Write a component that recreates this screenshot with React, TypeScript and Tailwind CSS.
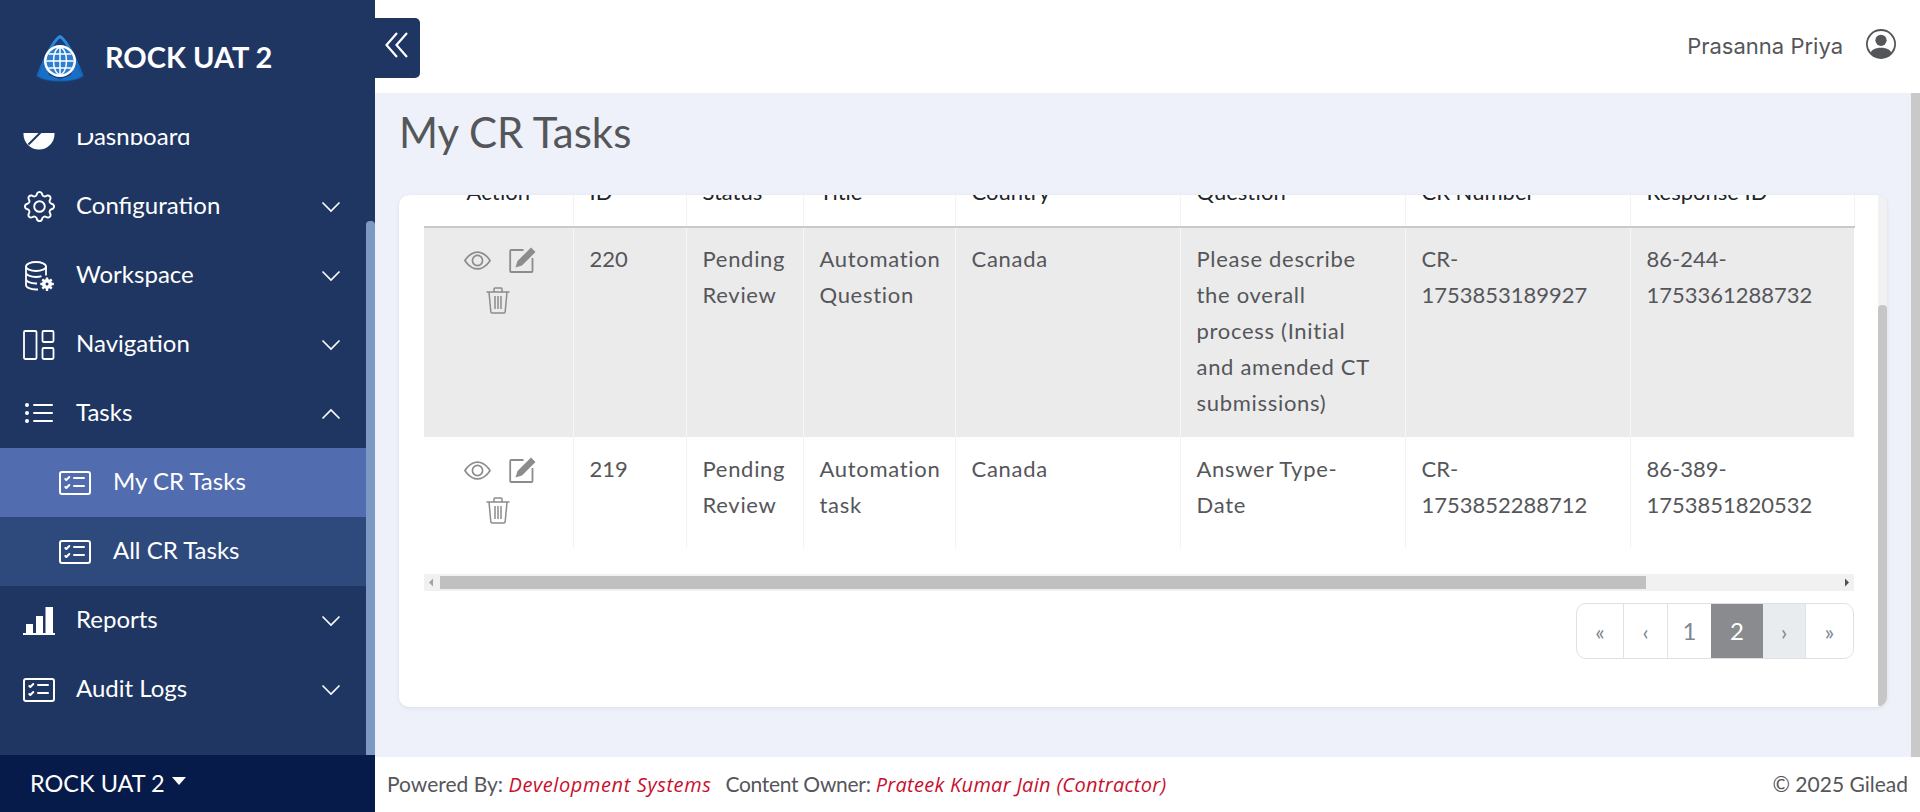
import { BsGear, BsListUl, BsCardChecklist, BsEye, BsPersonCircle } from "react-icons/bs";

const F = "font-['Lato','Liberation_Sans',sans-serif]";

function Chevron({ up }: { up?: boolean }) {
  return (
    <svg width="20" height="12" viewBox="0 0 20 12" fill="none" stroke="#ffffff" strokeWidth="1.6" className="mr-[25px] shrink-0">
      {up ? <path d="M1.5 10.5 10 2l8.5 8.5" /> : <path d="M1.5 1.5 10 10l8.5-8.5" />}
    </svg>
  );
}

function Logo() {
  return (
    <svg width="50" height="50" viewBox="0 0 50 50" className="shrink-0">
      <defs>
        <linearGradient id="tri" x1="0" y1="0" x2="0" y2="1">
          <stop offset="0" stopColor="#2f8fe0" />
          <stop offset="1" stopColor="#0b5cb0" />
        </linearGradient>
      </defs>
      <path d="M25 2.500C31 6 40 24 47 41.500 38 47.500 12 47.500 3 41.500 10 24 19 6 25 2.500Z" fill="#14407e" stroke="url(#tri)" strokeWidth="3" strokeLinejoin="round" />
      <path d="M3 41.500 11 28l3 13 13 5c-9 1.500-18 0-24-4.500ZM47 41.500 39 28l-3 13-13 5c9 1.500 18 0 24-4.500Z" fill="#1a6fc4" />
      <circle cx="25" cy="27" r="16" fill="#ffffff" />
      <circle cx="25" cy="27" r="13.500" fill="#2f7fd0" />
      <g stroke="#ffffff" strokeWidth="1.500" fill="none">
        <ellipse cx="25" cy="27" rx="6.500" ry="13.500" />
        <path d="M25 13.500v27M11.500 27h27M13.500 20h23M13.500 34h23" />
      </g>
    </svg>
  );
}

function DashIcon() {
  return (
    <svg width="32" height="32" viewBox="0 0 32 32" className="shrink-0 mb-[7px]">
      <circle cx="16" cy="16" r="15.500" fill="#ffffff" />
      <path d="M19 13 5.500 26.500" stroke="#1f3663" strokeWidth="2" />
    </svg>
  );
}

function DbIcon() {
  return (
    <svg width="30" height="30" viewBox="0 0 30 30" fill="none" stroke="#ffffff" strokeWidth="1.800" className="shrink-0">
      <ellipse cx="12" cy="5.500" rx="10" ry="4.500" />
      <path d="M2 5.500v18.500c0 2.500 4.500 4.500 10 4.500h2M22 5.500v9M2 11.500c0 2.500 4.500 4.500 10 4.500 2 0 4-.3 5.500-.8M2 18c0 2.500 4.500 4.500 10 4.500h1" />
      <path d="M23 16.500v13.500M16.300 23h13.500M18.300 18.300l9.400 9.400M27.700 18.300l-9.400 9.400" strokeWidth="2.400" />
      <circle cx="23" cy="23" r="5" fill="#ffffff" stroke="none" />
      <circle cx="23" cy="23" r="1.500" fill="#1f3663" stroke="none" />
    </svg>
  );
}

function PanelIcon() {
  return (
    <svg width="32" height="30" viewBox="0 0 32 30" fill="none" stroke="#ffffff" strokeWidth="1.800" className="shrink-0">
      <rect x="1" y="1" width="12.500" height="28" rx="1.200" />
      <rect x="19.500" y="1" width="11" height="11" rx="1.200" />
      <rect x="19.500" y="18" width="11" height="11" rx="1.200" />
    </svg>
  );
}

function BarsIcon() {
  return (
    <svg width="32" height="28" viewBox="0 0 32 28" fill="#ffffff" className="shrink-0">
      <rect x="3" y="17" width="7" height="9" />
      <rect x="13" y="9" width="7" height="17" />
      <rect x="22.500" y="0" width="7.500" height="26" />
      <rect x="0" y="26" width="32" height="2" />
    </svg>
  );
}

function EditIcon() {
  return (
    <svg width="27" height="26" viewBox="0 0 27 26" fill="none" className="shrink-0">
      <path d="M14.500 3H2.200a1 1 0 0 0-1 1v20a1 1 0 0 0 1 1h20.300a1 1 0 0 0 1-1V11" stroke="#8c8c8c" strokeWidth="1.800" />
      <path d="M22 .5 26.500 5 13 18.500l-6.500 2 2-6.500Z" fill="#8c8c8c" />
    </svg>
  );
}

function TrashIcon() {
  return (
    <svg width="24" height="27" viewBox="0 0 24 27" fill="none" stroke="#8c8c8c" strokeWidth="1.500" className="shrink-0">
      <path d="M.5 5h23M8 5V2a1 1 0 0 1 1-1h6a1 1 0 0 1 1 1v3M3 5l1.800 19.500a1.500 1.500 0 0 0 1.500 1.500h11.400a1.500 1.500 0 0 0 1.500-1.500L21 5M9 9v13M12 9v13M15 9v13" />
    </svg>
  );
}

const iconWrap = "w-[32px] flex justify-center shrink-0";

function NavRow({ icon, label, up, chevron = true }: { icon: React.ReactNode; label: string; up?: boolean; chevron?: boolean }) {
  return (
    <div className="h-[69px] flex items-center pl-[23px] text-white">
      <div className={iconWrap}>{icon}</div>
      <span className="ml-[21px] mb-[4px] flex-1 text-[24px] leading-none">{label}</span>
      {chevron && <Chevron up={up} />}
    </div>
  );
}

function SubRow({ label, active }: { label: string; active?: boolean }) {
  return (
    <div className={`h-[69px] flex items-center pl-[59px] text-white ${active ? "bg-[#526cb0]" : "bg-[#2e4a7d]"}`}>
      <BsCardChecklist size={32} />
      <span className="ml-[22px] mb-[4px] text-[24px] leading-none">{label}</span>
    </div>
  );
}

const cols = [149, 113, 117, 152, 225, 225, 225, 224];
const headers = ["Action", "ID", "Status", "Title", "Country", "Question", "CR Number", "Response ID"];
const rows = [
  {
    bg: "bg-[#ebebeb]",
    border: "border-[#f7f7f7]",
    h: "h-[210px]",
    pad: "pt-[13px]",
    iconPad: "pt-[17px]",
    cells: [
      ["220"],
      ["Pending", "Review"],
      ["Automation", "Question"],
      ["Canada"],
      ["Please describe", "the overall", "process (Initial", "and amended CT", "submissions)"],
      ["CR-", "1753853189927"],
      ["86-244-", "1753361288732"],
    ],
  },
  {
    bg: "bg-white",
    border: "border-[#f3f3f3]",
    h: "h-[111px]",
    pad: "pt-[14px]",
    iconPad: "pt-[18px]",
    cells: [
      ["219"],
      ["Pending", "Review"],
      ["Automation", "task"],
      ["Canada"],
      ["Answer Type-", "Date"],
      ["CR-", "1753852288712"],
      ["86-389-", "1753851820532"],
    ],
  },
];

function Pagination() {
  const base = "h-full flex items-center justify-center border-[#dee2e6] text-[#7d8794]";
  return (
    <div className="flex justify-end mt-[12px]">
      <div className="flex h-[56px] w-[278px] rounded-[10px] border border-[#dee2e6] overflow-hidden bg-white">
        <div className={`${base} w-[47px] border-r text-[22px]`}>«</div>
        <div className={`${base} w-[44px] border-r text-[22px]`}>‹</div>
        <div className={`${base} w-[43px] text-[24px] text-[#7a7a7a]`}>1</div>
        <div className={`${base} w-[52px] bg-[#8a8b8e] text-[24px] !text-white`}>2</div>
        <div className={`${base} w-[43px] bg-[#e9ecef] border-r text-[22px]`}>›</div>
        <div className={`${base} flex-1 text-[22px]`}>»</div>
      </div>
    </div>
  );
}

function HScrollbar() {
  return (
    <div className="mt-[26px] h-[17px] bg-[#f1f1f1] flex items-center">
      <svg width="16" height="17" viewBox="0 0 16 17" className="shrink-0" fill="#a3a3a3">
        <path d="M5 8.500 9 4.500v8Z" />
      </svg>
      <div className="w-[1206px] h-[13px] bg-[#c0c0c0]" />
      <div className="flex-1" />
      <svg width="15" height="17" viewBox="0 0 15 17" className="shrink-0" fill="#505050">
        <path d="M10 8.500 6 4.500v8Z" />
      </svg>
    </div>
  );
}

export default function App() {
  return (
    <div className={`flex h-[812px] w-[1920px] overflow-hidden ${F} text-[#55565a]`}>
      <aside className="w-[375px] shrink-0 flex flex-col bg-[#1f3663] relative">
        <div className="h-[133px] shrink-0 flex items-start pl-[35px] pt-[34px] relative z-10 bg-[#1f3663]">
          <Logo />
          <span className="ml-[20px] mt-[4px] text-[29px] font-bold text-white leading-[38px]">ROCK UAT 2</span>
        </div>
        <div className="flex-1 overflow-hidden relative">
          <div className="mt-[-30px] mr-[9px]">
            <NavRow icon={<DashIcon />} label="Dashboard" chevron={false} />
            <NavRow icon={<BsGear size={31} />} label="Configuration" />
            <NavRow icon={<DbIcon />} label="Workspace" />
            <NavRow icon={<PanelIcon />} label="Navigation" />
            <NavRow icon={<BsListUl size={32} />} label="Tasks" up />
            <SubRow label="My CR Tasks" active />
            <SubRow label="All CR Tasks" />
            <NavRow icon={<BarsIcon />} label="Reports" />
            <NavRow icon={<BsCardChecklist size={32} />} label="Audit Logs" />
          </div>
          <div className="absolute right-0 top-[88px] bottom-0 w-[9px] bg-[#7d98c2] rounded-t-[4px]" />
        </div>
        <div className="h-[57px] shrink-0 bg-[#061b49] flex items-center pl-[30px] text-white">
          <span className="text-[23.5px] leading-none">ROCK UAT 2</span>
          <span className="ml-[7px] mb-[6px] w-0 h-0 border-x-[7px] border-x-transparent border-t-[8px] border-t-white" />
        </div>
        <button className="absolute left-[375px] top-[18px] w-[45px] h-[60px] bg-[#1f3663] rounded-r-[5px] flex items-start justify-center pt-[14px] pr-[2px] z-20">
          <svg width="23" height="26" viewBox="0 0 23 26" fill="none" stroke="#ffffff" strokeWidth="2.200">
            <path d="M12 1 1.500 13 12 25M22 1 11.500 13 22 25" />
          </svg>
        </button>
      </aside>

      <div className="flex-1 flex flex-col min-w-0">
        <header className="h-[93px] shrink-0 bg-white flex items-start justify-end pr-[24px]">
          <span className="mt-[32px] text-[22px] leading-[28px] font-['Inter',sans-serif] text-[#55565a]">Prasanna Priya</span>
          <BsPersonCircle size={30} className="ml-[23px] mt-[29px] text-[#55565a]" />
        </header>

        <div className="flex-1 flex min-h-0 bg-[#eef1f9]">
          <main className="flex-1 min-w-0 pl-[24px] pr-[24px] flex flex-col">
            <h1 className="h-[102px] pt-[17px] text-[42px] leading-[44px] font-normal text-[#55565a] shrink-0">My CR Tasks</h1>
            <div className="h-[512px] shrink-0 flex bg-white rounded-[10px] overflow-hidden shadow-[0_1px_4px_rgba(0,0,0,0.08)]">
              <div className="flex-1 min-w-0 pl-[25px] pr-[24px] overflow-hidden">
                <table className="table-fixed border-collapse w-[1430px] mt-[-37px] text-[22px] leading-[36px]">
                  <colgroup>
                    {cols.map((w, i) => (
                      <col key={i} style={{ width: w }} />
                    ))}
                  </colgroup>
                  <thead>
                    <tr>
                      {headers.map((h, i) => (
                        <th
                          key={h}
                          className={`py-[16px] px-[16px] font-normal text-[#212529] border-b-2 border-b-[#c9c9c9] border-r border-r-[#f3f3f3] whitespace-nowrap ${i === 0 ? "text-center" : "text-left"}`}
                        >
                          {h}
                        </th>
                      ))}
                    </tr>
                  </thead>
                  <tbody>
                    {rows.map((r, ri) => (
                      <tr key={ri} className={`${r.bg} ${r.h}`}>
                        <td className={`align-top ${r.iconPad} px-[16px] border-r ${r.border}`}>
                          <div className="flex justify-center items-center gap-[18px] h-[30px] pl-[3px]">
                            <BsEye size={27} className="text-[#8c8c8c]" />
                            <EditIcon />
                          </div>
                          <div className="flex justify-center mt-[12px]">
                            <TrashIcon />
                          </div>
                        </td>
                        {r.cells.map((lines, ci) => (
                          <td key={ci} className={`align-top ${r.pad} px-[16px] whitespace-nowrap ${ci < 6 ? `border-r ${r.border}` : ""}`}>
                            {lines.map((l) => (
                              <div key={l} className={/^[A-Za-z]/.test(l) && l !== "CR-" ? "tracking-[0.7px]" : ""}>
                                {l}
                              </div>
                            ))}
                          </td>
                        ))}
                      </tr>
                    ))}
                  </tbody>
                </table>
                <HScrollbar />
                <Pagination />
              </div>
              <div className="w-[9px] shrink-0 bg-[#f1f1f1] flex flex-col">
                <div className="h-[110px] shrink-0" />
                <div className="flex-1 bg-[#c6c6c6] rounded-[4px]" />
              </div>
            </div>
          </main>
          <div className="w-[9px] shrink-0 bg-[#c9c9c9]" />
        </div>

        <footer className="h-[55px] shrink-0 bg-white flex items-center justify-between pl-[12px] pr-[12px] pb-[2px] text-[21px] text-[#55565a]">
          <div>
            <span>Powered By: </span>
            <em className="font-['Open_Sans',sans-serif] text-[20px] tracking-[0.6px] text-[#c8102e]">Development Systems</em>
            <span className="ml-[14px] tracking-[-0.3px]">Content Owner: </span>
            <em className="font-['Open_Sans',sans-serif] text-[20px] tracking-[0.3px] text-[#c8102e]">Prateek Kumar Jain (Contractor)</em>
          </div>
          <div>© 2025 Gilead</div>
        </footer>
      </div>
    </div>
  );
}
